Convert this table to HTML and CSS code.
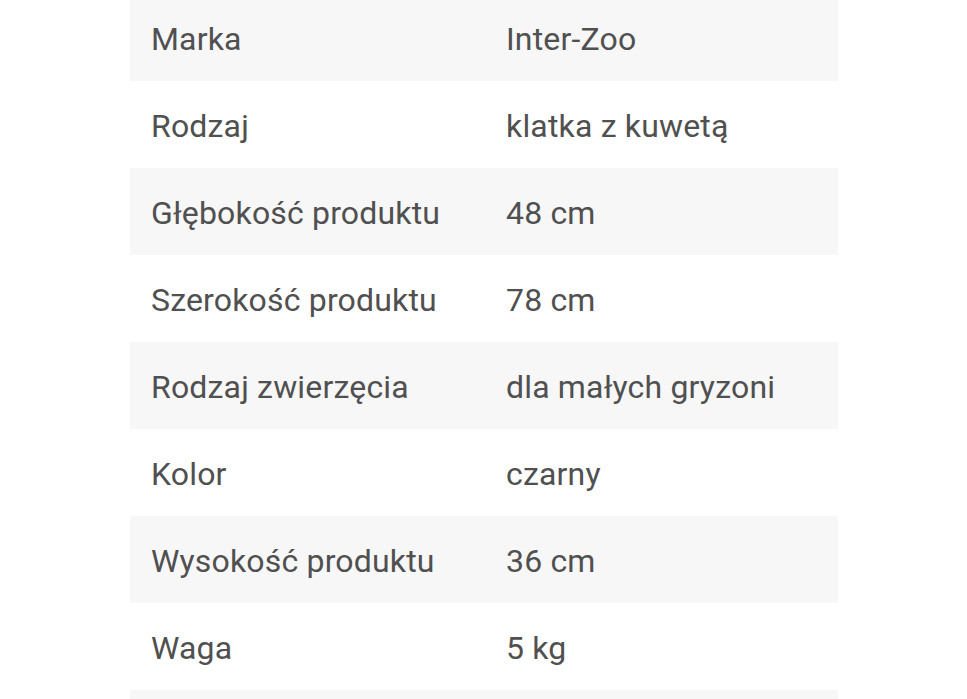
FILE: index.html
```html
<!DOCTYPE html>
<html lang="pl">
<head>
<meta charset="utf-8">
<link rel="stylesheet" href="styles.css">
</head>
<body>
<table class="specs">
<colgroup><col class="c-name"><col class="c-val"></colgroup>
<tbody>
<tr class="alt"><td>Marka</td><td>Inter-Zoo</td></tr>
<tr><td>Rodzaj</td><td>klatka z kuwetą</td></tr>
<tr class="alt"><td>Głębokość produktu</td><td>48 cm</td></tr>
<tr><td>Szerokość produktu</td><td>78 cm</td></tr>
<tr class="alt"><td>Rodzaj zwierzęcia</td><td>dla małych gryzoni</td></tr>
<tr><td>Kolor</td><td>czarny</td></tr>
<tr class="alt"><td>Wysokość produktu</td><td>36 cm</td></tr>
<tr><td>Waga</td><td>5 kg</td></tr>
<tr class="alt"><td>&nbsp;</td><td>&nbsp;</td></tr>
</tbody>
</table>
</body>
</html>
```
FILE: styles.css
```css
html, body {
  margin: 0;
  padding: 0;
  background: #ffffff;
  overflow: hidden;
}
body {
  font-family: Roboto, "Noto Sans", sans-serif;
  color: #505050;
}
.specs {
  border-collapse: collapse;
  table-layout: fixed;
  width: 708px;
  margin: -6px 0 0 130px;
}
.specs .c-name {
  width: 355px;
}
.specs tr {
  height: 87px;
}
.specs tr.alt {
  background: #f7f7f8;
}
.specs td {
  padding: 3px 0 0 21px;
  font-size: 32px;
  line-height: 38px;
  letter-spacing: 0.17px;
  vertical-align: middle;
  white-space: nowrap;
}
```
